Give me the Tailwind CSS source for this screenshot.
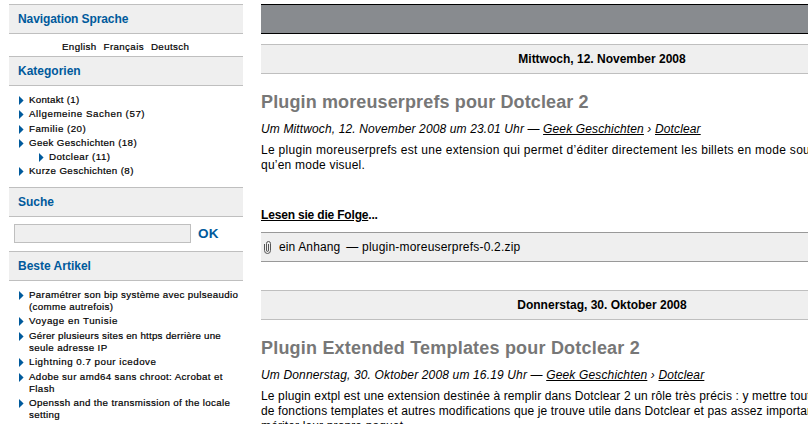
<!DOCTYPE html>
<html lang="de">
<head>
<meta charset="utf-8">
<title>Dotclear</title>
<script src="https://cdn.jsdelivr.net/npm/@tailwindcss/browser@4"></script>
</head>
<body class="w-[808px] h-[424px] overflow-hidden bg-white text-black font-['Liberation_Sans',Arial,sans-serif] text-[12px] leading-[15px] whitespace-nowrap">
<div class="flex pt-1 pl-[9px] gap-[18px]">
  <aside class="w-[234px] shrink-0 text-[9.75px] leading-[12px] tracking-[0.37px]">
    <h2 class="h-[30px] border-y border-[#bfbfbf] bg-[#efefef] pl-[9px] text-[12px] leading-[28px] font-bold tracking-[-0.1px] text-[#005a9c]">Navigation Sprache</h2>
    <div class="h-[22px] pt-[7px] pl-[53px] flex gap-[7px] [-webkit-text-stroke:0.2px]"><a>English</a><a>Français</a><a>Deutsch</a></div>
    <h2 class="h-[30px] border-y border-[#bfbfbf] bg-[#efefef] pl-[9px] text-[12px] leading-[28px] font-bold tracking-normal text-[#005a9c]">Kategorien</h2>
    <ul class="h-[101px] pt-[8px] pl-[10px] flex flex-col gap-[2.3px] [-webkit-text-stroke:0.2px]">
      <li class="flex gap-[5px]"><svg class="w-[5px] h-[9px] mt-[2px] shrink-0" viewBox="0 0 5 9" fill="#005a9c"><path d="M0 0L4.6 4.5L0 9Z"/></svg><span class="tracking-[0.25px]">Kontakt (1)</span></li>
      <li class="flex gap-[5px]"><svg class="w-[5px] h-[9px] mt-[2px] shrink-0" viewBox="0 0 5 9" fill="#005a9c"><path d="M0 0L4.6 4.5L0 9Z"/></svg><span class="tracking-[0.55px]">Allgemeine Sachen (57)</span></li>
      <li class="flex gap-[5px]"><svg class="w-[5px] h-[9px] mt-[2px] shrink-0" viewBox="0 0 5 9" fill="#005a9c"><path d="M0 0L4.6 4.5L0 9Z"/></svg><span class="tracking-[0.48px]">Familie (20)</span></li>
      <li class="flex gap-[5px]"><svg class="w-[5px] h-[9px] mt-[2px] shrink-0" viewBox="0 0 5 9" fill="#005a9c"><path d="M0 0L4.6 4.5L0 9Z"/></svg><span>Geek Geschichten (18)</span></li>
      <li class="flex gap-[5px] pl-[20px]"><svg class="w-[5px] h-[9px] mt-[2px] shrink-0" viewBox="0 0 5 9" fill="#005a9c"><path d="M0 0L4.6 4.5L0 9Z"/></svg><span class="tracking-[0.45px]">Dotclear (11)</span></li>
      <li class="flex gap-[5px]"><svg class="w-[5px] h-[9px] mt-[2px] shrink-0" viewBox="0 0 5 9" fill="#005a9c"><path d="M0 0L4.6 4.5L0 9Z"/></svg><span>Kurze Geschichten (8)</span></li>
    </ul>
    <h2 class="h-[30px] border-y border-[#bfbfbf] bg-[#efefef] pl-[9px] text-[12px] leading-[28px] font-bold tracking-normal text-[#005a9c]">Suche</h2>
    <form class="h-[34px] pt-[7px] pl-[5px] flex gap-[7px]">
      <input type="text" class="w-[177px] h-[19px] border border-[#bfbfbf] bg-[#efefef]">
      <button type="button" class="h-[19px] text-[13.5px] leading-[19px] font-bold tracking-[0.3px] text-[#005a9c]">OK</button>
    </form>
    <h2 class="h-[30px] border-y border-[#bfbfbf] bg-[#efefef] pl-[9px] text-[12px] leading-[28px] font-bold tracking-normal text-[#005a9c]">Beste Artikel</h2>
    <ul class="pt-[8px] pl-[10px] flex flex-col gap-[2.4px] [-webkit-text-stroke:0.2px]">
      <li class="flex gap-[5px]"><svg class="w-[5px] h-[9px] mt-[2px] shrink-0" viewBox="0 0 5 9" fill="#005a9c"><path d="M0 0L4.6 4.5L0 9Z"/></svg><span class="tracking-[0.34px]">Paramétrer son bip système avec pulseaudio<br>(comme autrefois)</span></li>
      <li class="flex gap-[5px]"><svg class="w-[5px] h-[9px] mt-[2px] shrink-0" viewBox="0 0 5 9" fill="#005a9c"><path d="M0 0L4.6 4.5L0 9Z"/></svg><span class="tracking-[0.54px]">Voyage en Tunisie</span></li>
      <li class="flex gap-[5px]"><svg class="w-[5px] h-[9px] mt-[2px] shrink-0" viewBox="0 0 5 9" fill="#005a9c"><path d="M0 0L4.6 4.5L0 9Z"/></svg><span><span class="tracking-[0.23px]">Gérer plusieurs sites en https derrière une</span><br>seule adresse IP</span></li>
      <li class="flex gap-[5px]"><svg class="w-[5px] h-[9px] mt-[2px] shrink-0" viewBox="0 0 5 9" fill="#005a9c"><path d="M0 0L4.6 4.5L0 9Z"/></svg><span class="tracking-[0.5px]">Lightning 0.7 pour icedove</span></li>
      <li class="flex gap-[5px]"><svg class="w-[5px] h-[9px] mt-[2px] shrink-0" viewBox="0 0 5 9" fill="#005a9c"><path d="M0 0L4.6 4.5L0 9Z"/></svg><span>Adobe sur amd64 sans chroot: Acrobat et<br>Flash</span></li>
      <li class="flex gap-[5px]"><svg class="w-[5px] h-[9px] mt-[2px] shrink-0" viewBox="0 0 5 9" fill="#005a9c"><path d="M0 0L4.6 4.5L0 9Z"/></svg><span class="tracking-[0.34px]">Openssh and the transmission of the locale<br>setting</span></li>
    </ul>
  </aside>
  <main class="w-[682px] shrink-0">
    <div class="h-[30px] border-y border-black bg-[#888b8f]"></div>
    <div class="mt-[10px] h-[30px] border-y border-[#bfbfbf] bg-[#efefef] text-center font-bold leading-[28px]">Mittwoch, 12. November 2008</div>
    <h1 class="mt-[17px] h-[22px] text-[18px] leading-[22px] font-bold tracking-[0.13px] text-[#777]">Plugin moreuserprefs pour Dotclear 2</h1>
    <p class="mt-[9px] italic tracking-[0.13px]">Um Mittwoch, 12. November 2008 um 23.01 Uhr — <a class="underline">Geek Geschichten</a> › <a class="underline">Dotclear</a></p>
    <p class="mt-[6px] tracking-[0.29px]">Le plugin moreuserprefs est une extension qui permet d’éditer directement les billets en mode source<br><span class="tracking-[0.22px]">qu’en mode visuel.</span></p>
    <p class="mt-[35px] font-bold tracking-[-0.18px]"><a class="underline">Lesen sie die Folge</a>...</p>
    <div class="mt-[9px] h-[30px] border-y border-[#999] bg-[#efefef] flex items-center pl-[2px]">
      <svg class="w-[9px] h-[13px]" viewBox="0 0 9 13" fill="none" stroke="#555" stroke-width="1"><path d="M1.5 3V9.5Q1.5 12.5 4.5 12.5Q7.5 12.5 7.5 9.5V2.5Q7.5 .5 5.5 .5Q3.5 .5 3.5 2.5V9Q3.5 10.5 4.5 10.5Q5.5 10.5 5.5 9V3"/></svg>
      <span class="ml-[7px] tracking-[0.13px]">ein Anhang</span><span class="ml-[6px] tracking-[0.2px]">— plugin-moreuserprefs-0.2.zip</span>
    </div>
    <div class="mt-[28px] h-[30px] border-y border-[#bfbfbf] bg-[#efefef] text-center font-bold leading-[28px]">Donnerstag, 30. Oktober 2008</div>
    <h1 class="mt-[17px] h-[22px] text-[18px] leading-[22px] font-bold tracking-[0.2px] text-[#777]">Plugin Extended Templates pour Dotclear 2</h1>
    <p class="mt-[9px] italic tracking-[0.15px]">Um Donnerstag, 30. Oktober 2008 um 16.19 Uhr — <a class="underline">Geek Geschichten</a> › <a class="underline">Dotclear</a></p>
    <p class="mt-[6px] tracking-[0.13px]">Le plugin extpl est une extension destinée à remplir dans Dotclear 2 un rôle très précis : y mettre toutes sortes<br>de fonctions templates et autres modifications que je trouve utile dans Dotclear et pas assez importantes<br>mériter leur propre paquet.</p>
  </main>
</div>
</body>
</html>
